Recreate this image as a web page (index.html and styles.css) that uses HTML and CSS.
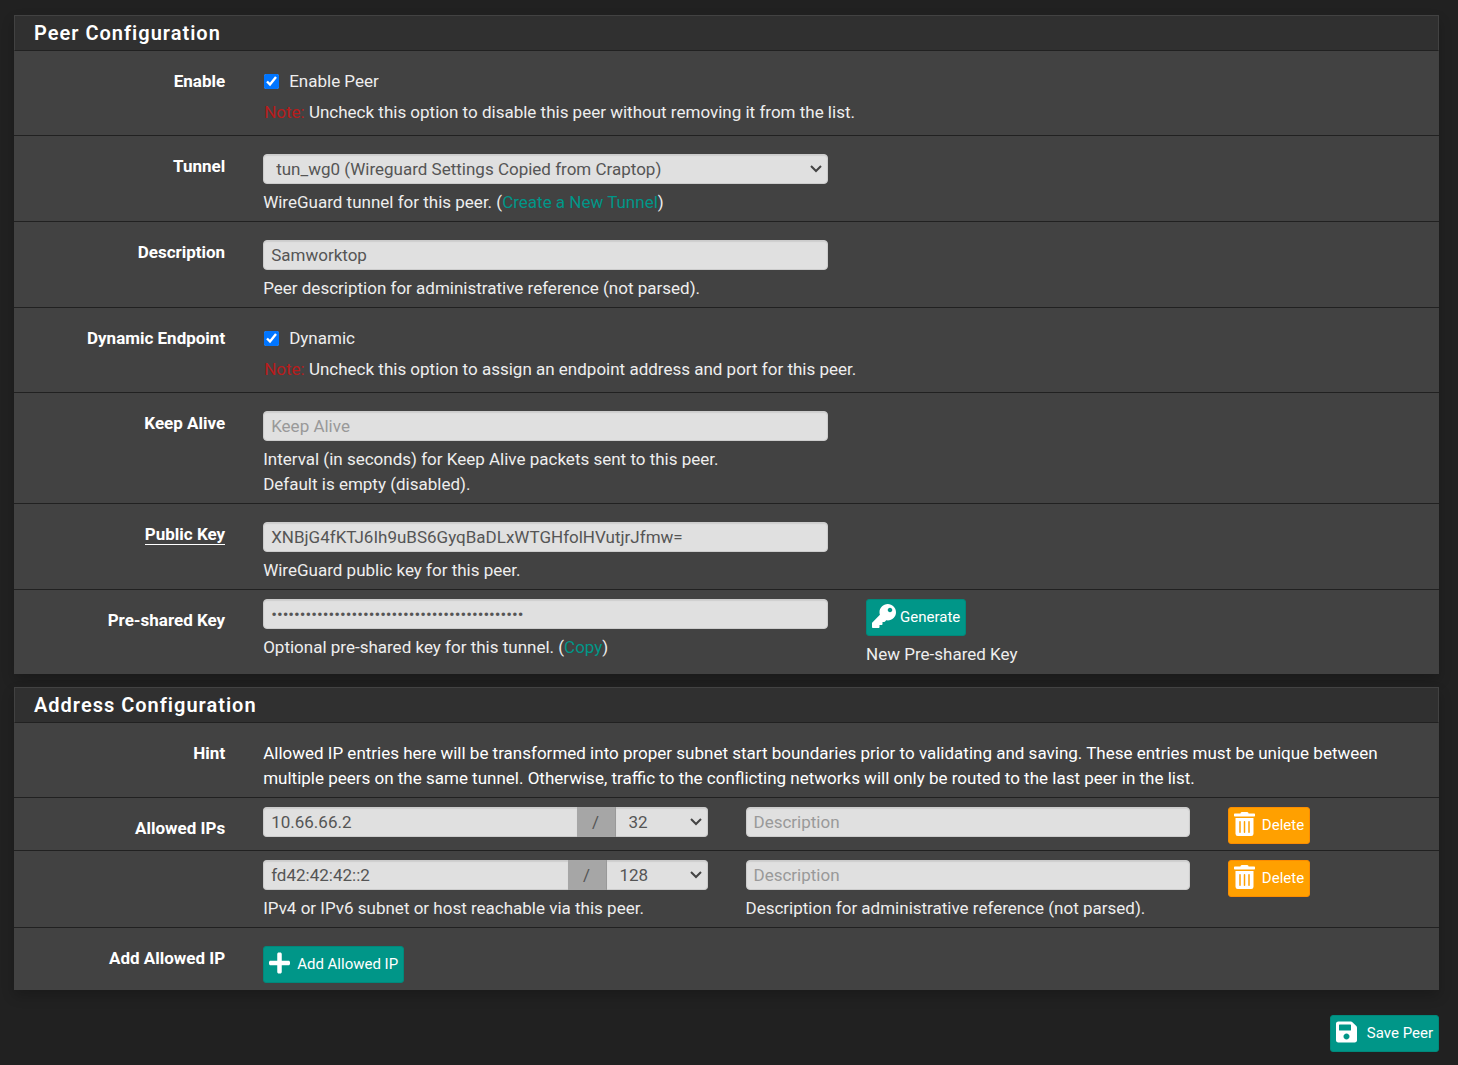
FILE: index.html
```html
<!DOCTYPE html>
<html lang="en">
<head>
<meta charset="utf-8">
<title>Peer Configuration</title>
<meta name="viewport" content="width=device-width, initial-scale=1">
<link rel="stylesheet" href="styles.css">
</head>
<body>
<form class="page">
  <section class="panel">
    <h2 class="panel-heading">Peer Configuration</h2>

    <div class="row">
      <span class="row-label">Enable</span>
      <div class="col-10">
        <label class="check"><input type="checkbox" checked> Enable Peer</label>
        <p class="help note"><span class="danger">Note:</span> Uncheck this option to disable this peer without removing it from the list.</p>
      </div>
    </div>

    <div class="row">
      <label class="row-label" for="tunnel">Tunnel</label>
      <div class="col-5">
        <select class="control" id="tunnel"><option>tun_wg0 (Wireguard Settings Copied from Craptop)</option></select>
        <p class="help">WireGuard tunnel for this peer. (<a href="#">Create a New Tunnel</a>)</p>
      </div>
    </div>

    <div class="row">
      <label class="row-label" for="descr">Description</label>
      <div class="col-5">
        <input class="control" id="descr" type="text" value="Samworktop">
        <p class="help">Peer description for administrative reference (not parsed).</p>
      </div>
    </div>

    <div class="row">
      <span class="row-label">Dynamic Endpoint</span>
      <div class="col-10">
        <label class="check"><input type="checkbox" checked> Dynamic</label>
        <p class="help note"><span class="danger">Note:</span> Uncheck this option to assign an endpoint address and port for this peer.</p>
      </div>
    </div>

    <div class="row">
      <label class="row-label" for="keepalive">Keep Alive</label>
      <div class="col-5">
        <input class="control" id="keepalive" type="text" placeholder="Keep Alive">
        <p class="help">Interval (in seconds) for Keep Alive packets sent to this peer.<br>Default is empty (disabled).</p>
      </div>
    </div>

    <div class="row">
      <label class="row-label required" for="publickey"><span>Public Key</span></label>
      <div class="col-5">
        <input class="control" id="publickey" type="text" value="XNBjG4fKTJ6Ih9uBS6GyqBaDLxWTGHfolHVutjrJfmw=">
        <p class="help">WireGuard public key for this peer.</p>
      </div>
    </div>

    <div class="row compact">
      <label class="row-label" for="psk">Pre-shared Key</label>
      <div class="col-5">
        <input class="control" id="psk" type="password" value="abcdefghijklmnopqrstuvwxyzabcdefghijklmnopqr">
        <p class="help">Optional pre-shared key for this tunnel. (<a href="#">Copy</a>)</p>
      </div>
      <div class="col-5">
        <button class="btn key" type="button"><svg viewBox="0 0 512 512" width="24" height="24" aria-hidden="true"><path d="M512 176.001C512 273.203 433.202 352 336 352c-11.22 0-22.19-1.062-32.827-3.069l-24.012 27.014A23.999 23.999 0 0 1 261.223 384H224v40c0 13.255-10.745 24-24 24h-40v40c0 13.255-10.745 24-24 24H24c-13.255 0-24-10.745-24-24v-78.059c0-6.365 2.529-12.47 7.029-16.971l161.802-161.802C163.108 213.814 160 195.271 160 176 160 78.798 238.797.001 335.999 0 433.488-.001 512 78.511 512 176.001zM336 128c0 26.51 21.49 48 48 48s48-21.49 48-48-21.49-48-48-48-48 21.49-48 48z"/></svg>Generate</button>
        <p class="help">New Pre-shared Key</p>
      </div>
    </div>
  </section>

  <section class="panel">
    <h2 class="panel-heading">Address Configuration</h2>

    <div class="row">
      <span class="row-label">Hint</span>
      <div class="col-10">
        <p class="text">Allowed IP entries here will be transformed into proper subnet start boundaries prior to validating and saving. These entries must be unique between multiple peers on the same tunnel. Otherwise, traffic to the conflicting networks will only be routed to the last peer in the list.</p>
      </div>
    </div>

    <div class="row compact">
      <label class="row-label" for="ip0">Allowed IPs</label>
      <div class="col-4">
        <div class="group">
          <input class="control" id="ip0" type="text" value="10.66.66.2">
          <span class="addon">/</span>
          <select class="control" aria-label="Prefix length"><option>32</option></select>
        </div>
      </div>
      <div class="col-4"><input class="control" type="text" placeholder="Description" aria-label="Description"></div>
      <div class="col-2">
        <button class="btn warning" type="button"><svg viewBox="0 0 448 512" width="21" height="24" aria-hidden="true"><path d="M32 464a48 48 0 0 0 48 48h288a48 48 0 0 0 48-48V128H32zm272-256a16 16 0 0 1 32 0v224a16 16 0 0 1-32 0zm-96 0a16 16 0 0 1 32 0v224a16 16 0 0 1-32 0zm-96 0a16 16 0 0 1 32 0v224a16 16 0 0 1-32 0zM432 32H312l-9.4-18.7A24 24 0 0 0 281.1 0H166.8a23.72 23.72 0 0 0-21.4 13.3L136 32H16A16 16 0 0 0 0 48v32a16 16 0 0 0 16 16h416a16 16 0 0 0 16-16V48a16 16 0 0 0-16-16z"/></svg>Delete</button>
      </div>
    </div>

    <div class="row compact">
      <span class="row-label"></span>
      <div class="col-4">
        <div class="group">
          <input class="control" type="text" value="fd42:42:42::2" aria-label="Allowed IP">
          <span class="addon">/</span>
          <select class="control" aria-label="Prefix length"><option>128</option></select>
        </div>
        <p class="help">IPv4 or IPv6 subnet or host reachable via this peer.</p>
      </div>
      <div class="col-4">
        <input class="control" type="text" placeholder="Description" aria-label="Description">
        <p class="help">Description for administrative reference (not parsed).</p>
      </div>
      <div class="col-2">
        <button class="btn warning" type="button"><svg viewBox="0 0 448 512" width="21" height="24" aria-hidden="true"><path d="M32 464a48 48 0 0 0 48 48h288a48 48 0 0 0 48-48V128H32zm272-256a16 16 0 0 1 32 0v224a16 16 0 0 1-32 0zm-96 0a16 16 0 0 1 32 0v224a16 16 0 0 1-32 0zm-96 0a16 16 0 0 1 32 0v224a16 16 0 0 1-32 0zM432 32H312l-9.4-18.7A24 24 0 0 0 281.1 0H166.8a23.72 23.72 0 0 0-21.4 13.3L136 32H16A16 16 0 0 0 0 48v32a16 16 0 0 0 16 16h416a16 16 0 0 0 16-16V48a16 16 0 0 0-16-16z"/></svg>Delete</button>
      </div>
    </div>

    <div class="row">
      <span class="row-label">Add Allowed IP</span>
      <div class="col-10">
        <button class="btn" type="button"><svg viewBox="0 0 448 512" width="21" height="24" aria-hidden="true"><path d="M416 208H272V64c0-17.67-14.33-32-32-32h-32c-17.67 0-32 14.33-32 32v144H32c-17.67 0-32 14.33-32 32v32c0 17.67 14.33 32 32 32h144v144c0 17.67 14.33 32 32 32h32c17.67 0 32-14.33 32-32V304h144c17.67 0 32-14.33 32-32v-32c0-17.67-14.33-32-32-32z"/></svg>Add Allowed IP</button>
      </div>
    </div>
  </section>

  <div class="actions">
    <button class="btn save" type="submit"><svg viewBox="0 0 448 512" width="21" height="24" aria-hidden="true"><path d="M433.941 129.941l-83.882-83.882A48 48 0 0 0 316.118 32H48C21.49 32 0 53.49 0 80v352c0 26.51 21.49 48 48 48h352c26.51 0 48-21.49 48-48V163.882a48 48 0 0 0-14.059-33.941zM224 416c-35.346 0-64-28.654-64-64 0-35.346 28.654-64 64-64s64 28.654 64 64c0 35.346-28.654 64-64 64zm96-304.52V212c0 6.627-5.373 12-12 12H76c-6.627 0-12-5.373-12-12V108c0-6.627 5.373-12 12-12h228.52c3.183 0 6.235 1.264 8.485 3.515l3.48 3.48A11.996 11.996 0 0 1 320 111.48z"/></svg>Save Peer</button>
  </div>
</form>
</body>
</html>
```
FILE: styles.css
```css
*, *::before, *::after { box-sizing: border-box; }

body {
  margin: 0;
  background: #212121;
  color: #eee;
  font: 17px/25px Roboto, "Liberation Sans", sans-serif;
}

.page { padding: 15px 19px 13px 14px; }

.panel {
  overflow: hidden;
  margin-bottom: 13px;
  background: #424242;
  box-shadow: 0 6px 12px rgba(0, 0, 0, 0.2);
}

.panel-heading {
  margin: 0;
  padding: 5px 19px 4px;
  border: 1px solid #424242;
  border-bottom-color: #212121;
  background: #303030;
  color: #fff;
  font-size: 20px;
  font-weight: 600;
  letter-spacing: 1px;
}

.row {
  display: grid;
  grid-template-columns: repeat(12, minmax(0, 1fr));
  align-items: start;
  margin: 0 -11px;
  padding: 18px 0 6px;
  border-bottom: 1px solid #212121;
}
.row:last-child { border-bottom-color: #424242; }
.row > * { padding: 0 19px; min-width: 0; }

.row-label {
  grid-column: span 2;
  color: #fff;
  font-weight: 700;
  text-align: right;
}
.required span { border-bottom: 1px solid #fff; }

.col-2 { grid-column: span 2; }
.col-4 { grid-column: span 4; }
.col-5 { grid-column: span 5; }
.col-10 { grid-column: span 10; }

.row.compact { padding-top: 9px; }
.compact .row-label { padding-top: 9px; }

.help, .text { margin: 0; }
.help { padding-top: 6px; }
.text { color: #fff; }
.note { padding-left: 1px; padding-bottom: 4px; }
.danger { color: #b71c1c; }

a { color: #009688; text-decoration: none; }

.check { display: flex; align-items: center; gap: 10px; }
.check input { width: 15px; height: 15px; margin: 0 0 0 1px; accent-color: #0075ff; }

.control {
  display: block;
  width: 100%;
  height: 30px;
  padding: 0 7px 1px;
  border: 1px solid #ccc;
  border-radius: 4px;
  background: #e0e0e0;
  box-shadow: inset 0 1px 1px rgba(0, 0, 0, 0.08);
  color: #555;
  font: inherit;
}
.control::placeholder { color: #999; opacity: 1; }
select.control {
  appearance: none;
  padding: 0 36px 0 12px;
  background: #e0e0e0 url("data:image/svg+xml,%3Csvg xmlns='http://www.w3.org/2000/svg' width='12' height='8' viewBox='0 0 12 8'%3E%3Cpath d='M1 1l5 5 5-5' fill='none' stroke='%23444' stroke-width='2'/%3E%3C/svg%3E") no-repeat right 5px center;
}

.group { display: flex; }
.group input { flex: 1; min-width: 0; border-right: 0; border-radius: 4px 0 0 4px; }
.group select.control { flex: none; width: auto; padding-left: 13px; padding-right: 58px; border-left-color: #999; border-radius: 0 4px 4px 0; }
.addon {
  width: 38px;
  height: 30px;
  line-height: 30px;
  background: #a6a6a6;
  color: #555;
  text-align: center;
}

.btn {
  display: inline-flex;
  align-items: center;
  gap: 7px;
  height: 37px;
  padding: 0 5px 2px;
  border: 1px solid #00897b;
  border-radius: 3px;
  background: #009688;
  color: #fff;
  font: 400 15px/22px Roboto, "Liberation Sans", sans-serif;
  vertical-align: top;
}
.btn svg { fill: currentColor; margin-bottom: 1px; }
.btn.key { gap: 4px; }
.btn.save { gap: 10px; }
.btn.warning { border-color: #fb8c00; background: #ffa000; }

.actions { display: flex; justify-content: flex-end; padding-top: 12px; }
```
